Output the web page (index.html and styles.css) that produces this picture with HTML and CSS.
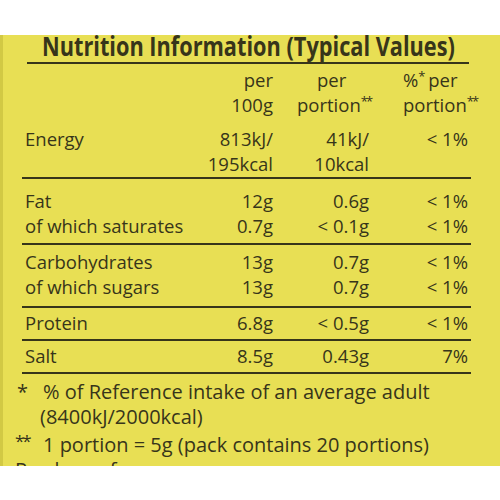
FILE: index.html
```html
<!DOCTYPE html>
<html lang="en">
<head>
<meta charset="utf-8">
<title>Nutrition Information</title>
<link rel="stylesheet" href="styles.css">
</head>
<body>
<div class="sheet">
  <div class="label">
    <h1 class="title"><span>Nutrition Information (Typical Values)</span></h1>
    <div class="table">
      <div class="row head">
        <div class="name"></div>
        <div class="v2"><div>per</div><div>100g</div></div>
        <div class="v3"><div class="indent">per</div><div>portion<sup>**</sup></div></div>
        <div class="v4"><div>%<sup>*</sup> per</div><div>portion<sup>**</sup></div></div>
      </div>
      <div class="row energy">
        <div class="name">Energy</div>
        <div class="v2"><div>813kJ/</div><div>195kcal</div></div>
        <div class="v3"><div>41kJ/</div><div>10kcal</div></div>
        <div class="v4"><div>&lt; 1%</div></div>
      </div>
      <div class="row fat">
        <div class="name"><div>Fat</div><div>of which saturates</div></div>
        <div class="v2"><div>12g</div><div>0.7g</div></div>
        <div class="v3"><div>0.6g</div><div>&lt; 0.1g</div></div>
        <div class="v4"><div>&lt; 1%</div><div>&lt; 1%</div></div>
      </div>
      <div class="row carb">
        <div class="name"><div>Carbohydrates</div><div>of which sugars</div></div>
        <div class="v2"><div>13g</div><div>13g</div></div>
        <div class="v3"><div>0.7g</div><div>0.7g</div></div>
        <div class="v4"><div>&lt; 1%</div><div>&lt; 1%</div></div>
      </div>
      <div class="row single">
        <div class="name">Protein</div>
        <div class="v2">6.8g</div>
        <div class="v3">&lt; 0.5g</div>
        <div class="v4">&lt; 1%</div>
      </div>
      <div class="row single">
        <div class="name">Salt</div>
        <div class="v2">8.5g</div>
        <div class="v3">0.43g</div>
        <div class="v4">7%</div>
      </div>
    </div>
    <div class="notes">
      <div class="note"><span class="mark">*</span><span class="text">% of Reference intake of an average adult</span></div>
      <div class="note"><span class="mark"></span><span class="text paren">(8400kJ/2000kcal)</span></div>
      <div class="note gap"><span class="mark mark2">**</span><span class="text">1 portion = 5g (pack contains 20 portions)</span></div>
      <div class="more">Produce of more</div>
    </div>
  </div>
</div>
</body>
</html>
```
FILE: styles.css
```css
body {
  margin: 0;
  background: #ffffff;
  font-family: "Open Sans", "DejaVu Sans", sans-serif;
  color: #37351a;
}

.sheet {
  padding-top: 35px;
  height: 500px;
  box-sizing: border-box;
}

.label {
  height: 431px;
  overflow: hidden;
  background: #e8df54;
  box-shadow: inset 3px 0 0 #d2c944;
}

.title {
  margin: 0 31px 0 27px;
  padding: 0 0 5px 15px;
  border-bottom: 2px solid #37351a;
  font-size: 26.5px;
  line-height: 22px;
  font-weight: 700;
  white-space: nowrap;
}

.title span {
  display: inline-block;
  transform: scaleX(0.82);
  transform-origin: 0 50%;
}

.table {
  margin: 0 29px 0 22px;
  font-size: 18.5px;
  line-height: 25px;
}

.row {
  display: grid;
  grid-template-columns: 168px 83px 96px 99px;
  border-bottom: 2px solid #37351a;
  white-space: nowrap;
}

.row.head {
  border-bottom: 0;
  padding-top: 3px;
}

.row.energy { padding: 9px 0 1px; }
.row.fat { padding: 9px 0 5px; }
.row.carb { padding: 4px 0 7px; }
.row.single { padding: 2px 0 4px; }

.name { padding-left: 3px; }

.v2, .v3, .v4 { text-align: right; }

.head .v3 {
  text-align: left;
  padding-left: 24px;
}

.head .v3 .indent { padding-left: 20px; }

.head .v4 {
  text-align: left;
  padding-left: 34px;
}

sup {
  font-size: 13px;
  line-height: 0;
  vertical-align: 6px;
  letter-spacing: -2px;
}

.notes {
  padding: 5px 0 0 14px;
  font-size: 20px;
  line-height: 25px;
  white-space: nowrap;
}

.note {
  display: grid;
  grid-template-columns: 29px auto;
}

.mark { padding-left: 3px; }

.mark2 {
  padding-left: 1px;
  font-size: 17px;
  letter-spacing: -2px;
  position: relative;
  top: -4px;
}

.paren { margin-left: -3px; }

.note.gap { margin-top: 3px; }

.more {
  padding-left: 1px;
  margin-top: 0;
}
```
